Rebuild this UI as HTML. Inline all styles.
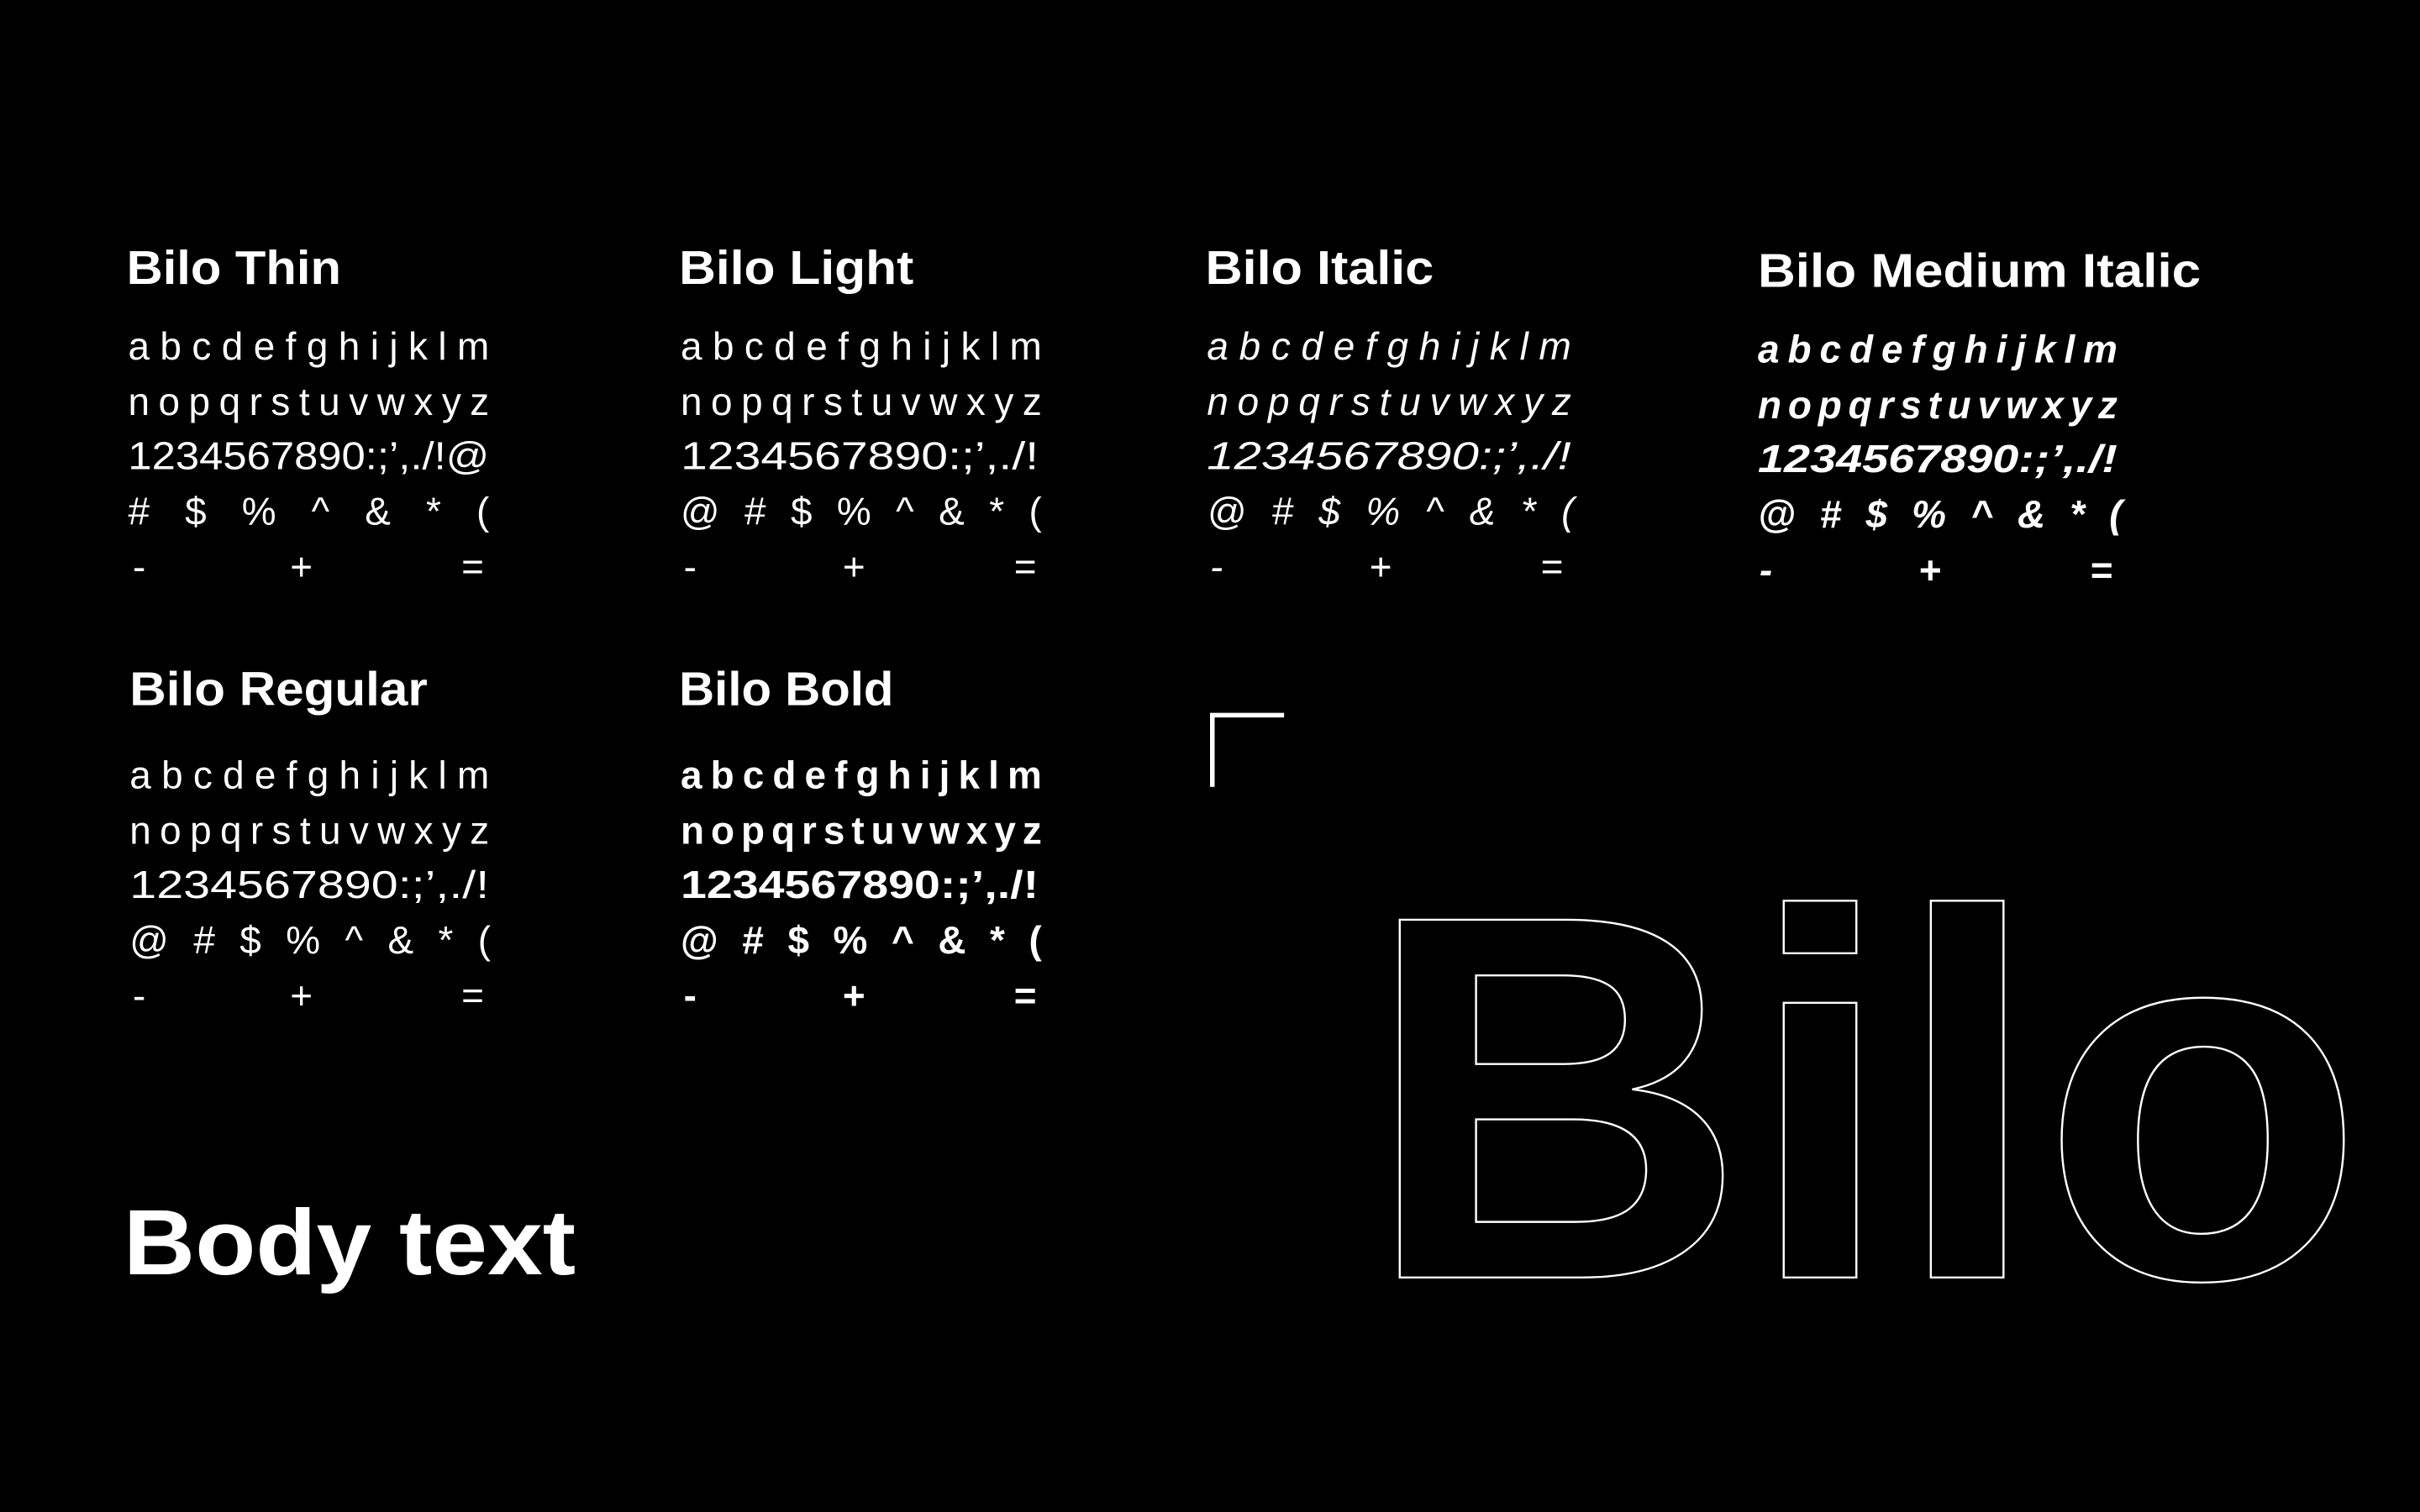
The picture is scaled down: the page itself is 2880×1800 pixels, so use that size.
<!DOCTYPE html>
<html><head><meta charset="utf-8"><style>
html,body{margin:0;padding:0;background:#000;width:2880px;height:1800px;overflow:hidden}
svg{display:block}
text{font-family:"Liberation Sans",sans-serif;fill:#fff}
.h{font-weight:bold;font-size:31px}
.r{font-size:25px}
.t{fill:#c8c8c8;font-weight:normal}
.l{fill:#e6e6e6}
.i{font-style:italic}
.b{font-weight:bold}
</style></head><body>
<svg width="2880" height="1800" viewBox="0 0 1568 980" xmlns="http://www.w3.org/2000/svg">
<rect width="1568" height="980" fill="#000"/>
<!-- Thin -->
<text class="h" x="82" y="184" textLength="139" lengthAdjust="spacingAndGlyphs">Bilo Thin</text>
<g class="r t">
<text x="83" y="233" textLength="234" lengthAdjust="spacing">a b c d e f g h i j k l m</text>
<text x="83" y="269" textLength="234" lengthAdjust="spacing">n o p q r s t u v w x y z</text>
<text x="83" y="304" textLength="234" lengthAdjust="spacingAndGlyphs">1234567890:;’,./!@</text>
<text x="83" y="340" textLength="234" lengthAdjust="spacing"># $ % ^ &amp; * (</text>
<text x="86" y="376">-</text><text x="188" y="376">+</text><text x="299" y="376">=</text>
</g>
<!-- Light -->
<text class="h" x="440" y="184" textLength="152" lengthAdjust="spacingAndGlyphs">Bilo Light</text>
<g class="r l">
<text x="441" y="233" textLength="234" lengthAdjust="spacing">a b c d e f g h i j k l m</text>
<text x="441" y="269" textLength="234" lengthAdjust="spacing">n o p q r s t u v w x y z</text>
<text x="441" y="304" textLength="232" lengthAdjust="spacingAndGlyphs">1234567890:;’,./!</text>
<text x="441" y="340" textLength="234" lengthAdjust="spacing">@ # $ % ^ &amp; * (</text>
<text x="443" y="376">-</text><text x="546" y="376">+</text><text x="657" y="376">=</text>
</g>
<!-- Italic -->
<text class="h" x="781" y="184" textLength="148" lengthAdjust="spacingAndGlyphs">Bilo Italic</text>
<g class="r i">
<text x="782" y="233" textLength="236" lengthAdjust="spacing">a b c d e f g h i j k l m</text>
<text x="782" y="269" textLength="236" lengthAdjust="spacing">n o p q r s t u v w x y z</text>
<text x="782" y="304" textLength="236" lengthAdjust="spacingAndGlyphs">1234567890:;’,./!</text>
<text x="782" y="340" textLength="238" lengthAdjust="spacing">@ # $ % ^ &amp; * (</text>
<text x="784" y="376">-</text><text x="887" y="376">+</text><text x="998" y="376">=</text>
</g>
<!-- Medium Italic -->
<text class="h" x="1139" y="186" textLength="287" lengthAdjust="spacingAndGlyphs">Bilo Medium Italic</text>
<g class="r i b">
<text x="1139" y="235" textLength="233" lengthAdjust="spacing">a b c d e f g h i j k l m</text>
<text x="1139" y="271" textLength="233" lengthAdjust="spacing">n o p q r s t u v w x y z</text>
<text x="1139" y="306" textLength="233" lengthAdjust="spacingAndGlyphs">1234567890:;’,./!</text>
<text x="1139" y="342" textLength="236" lengthAdjust="spacing">@ # $ % ^ &amp; * (</text>
<text x="1140" y="378">-</text><text x="1243" y="378">+</text><text x="1354" y="378">=</text>
</g>
<!-- Regular -->
<text class="h" x="84" y="457" textLength="193" lengthAdjust="spacingAndGlyphs">Bilo Regular</text>
<g class="r">
<text x="84" y="511" textLength="233" lengthAdjust="spacing">a b c d e f g h i j k l m</text>
<text x="84" y="547" textLength="233" lengthAdjust="spacing">n o p q r s t u v w x y z</text>
<text x="84" y="582" textLength="233" lengthAdjust="spacingAndGlyphs">1234567890:;’,./!</text>
<text x="84" y="618" textLength="234" lengthAdjust="spacing">@ # $ % ^ &amp; * (</text>
<text x="86" y="654">-</text><text x="188" y="654">+</text><text x="299" y="654">=</text>
</g>
<!-- Bold -->
<text class="h" x="440" y="457" textLength="139" lengthAdjust="spacingAndGlyphs">Bilo Bold</text>
<g class="r b">
<text x="441" y="511" textLength="234" lengthAdjust="spacing">a b c d e f g h i j k l m</text>
<text x="441" y="547" textLength="234" lengthAdjust="spacing">n o p q r s t u v w x y z</text>
<text x="441" y="582" textLength="232" lengthAdjust="spacingAndGlyphs">1234567890:;’,./!</text>
<text x="441" y="618" textLength="234" lengthAdjust="spacing">@ # $ % ^ &amp; * (</text>
<text x="443" y="654">-</text><text x="546" y="654">+</text><text x="657" y="654">=</text>
</g>
<!-- Body text -->
<text x="80" y="826" style="font-weight:bold;font-size:60px" textLength="293" lengthAdjust="spacingAndGlyphs">Body text</text>
<!-- corner bracket -->
<path d="M785.5 510 V463.5 H832" fill="none" stroke="#fff" stroke-width="3"/>
<!-- outline Bilo -->
<text x="884" y="828" style="font-weight:bold;font-size:337px;fill:none;stroke:#fff;stroke-width:1.3" textLength="648" lengthAdjust="spacingAndGlyphs">Bilo</text>
</svg>
</body></html>
